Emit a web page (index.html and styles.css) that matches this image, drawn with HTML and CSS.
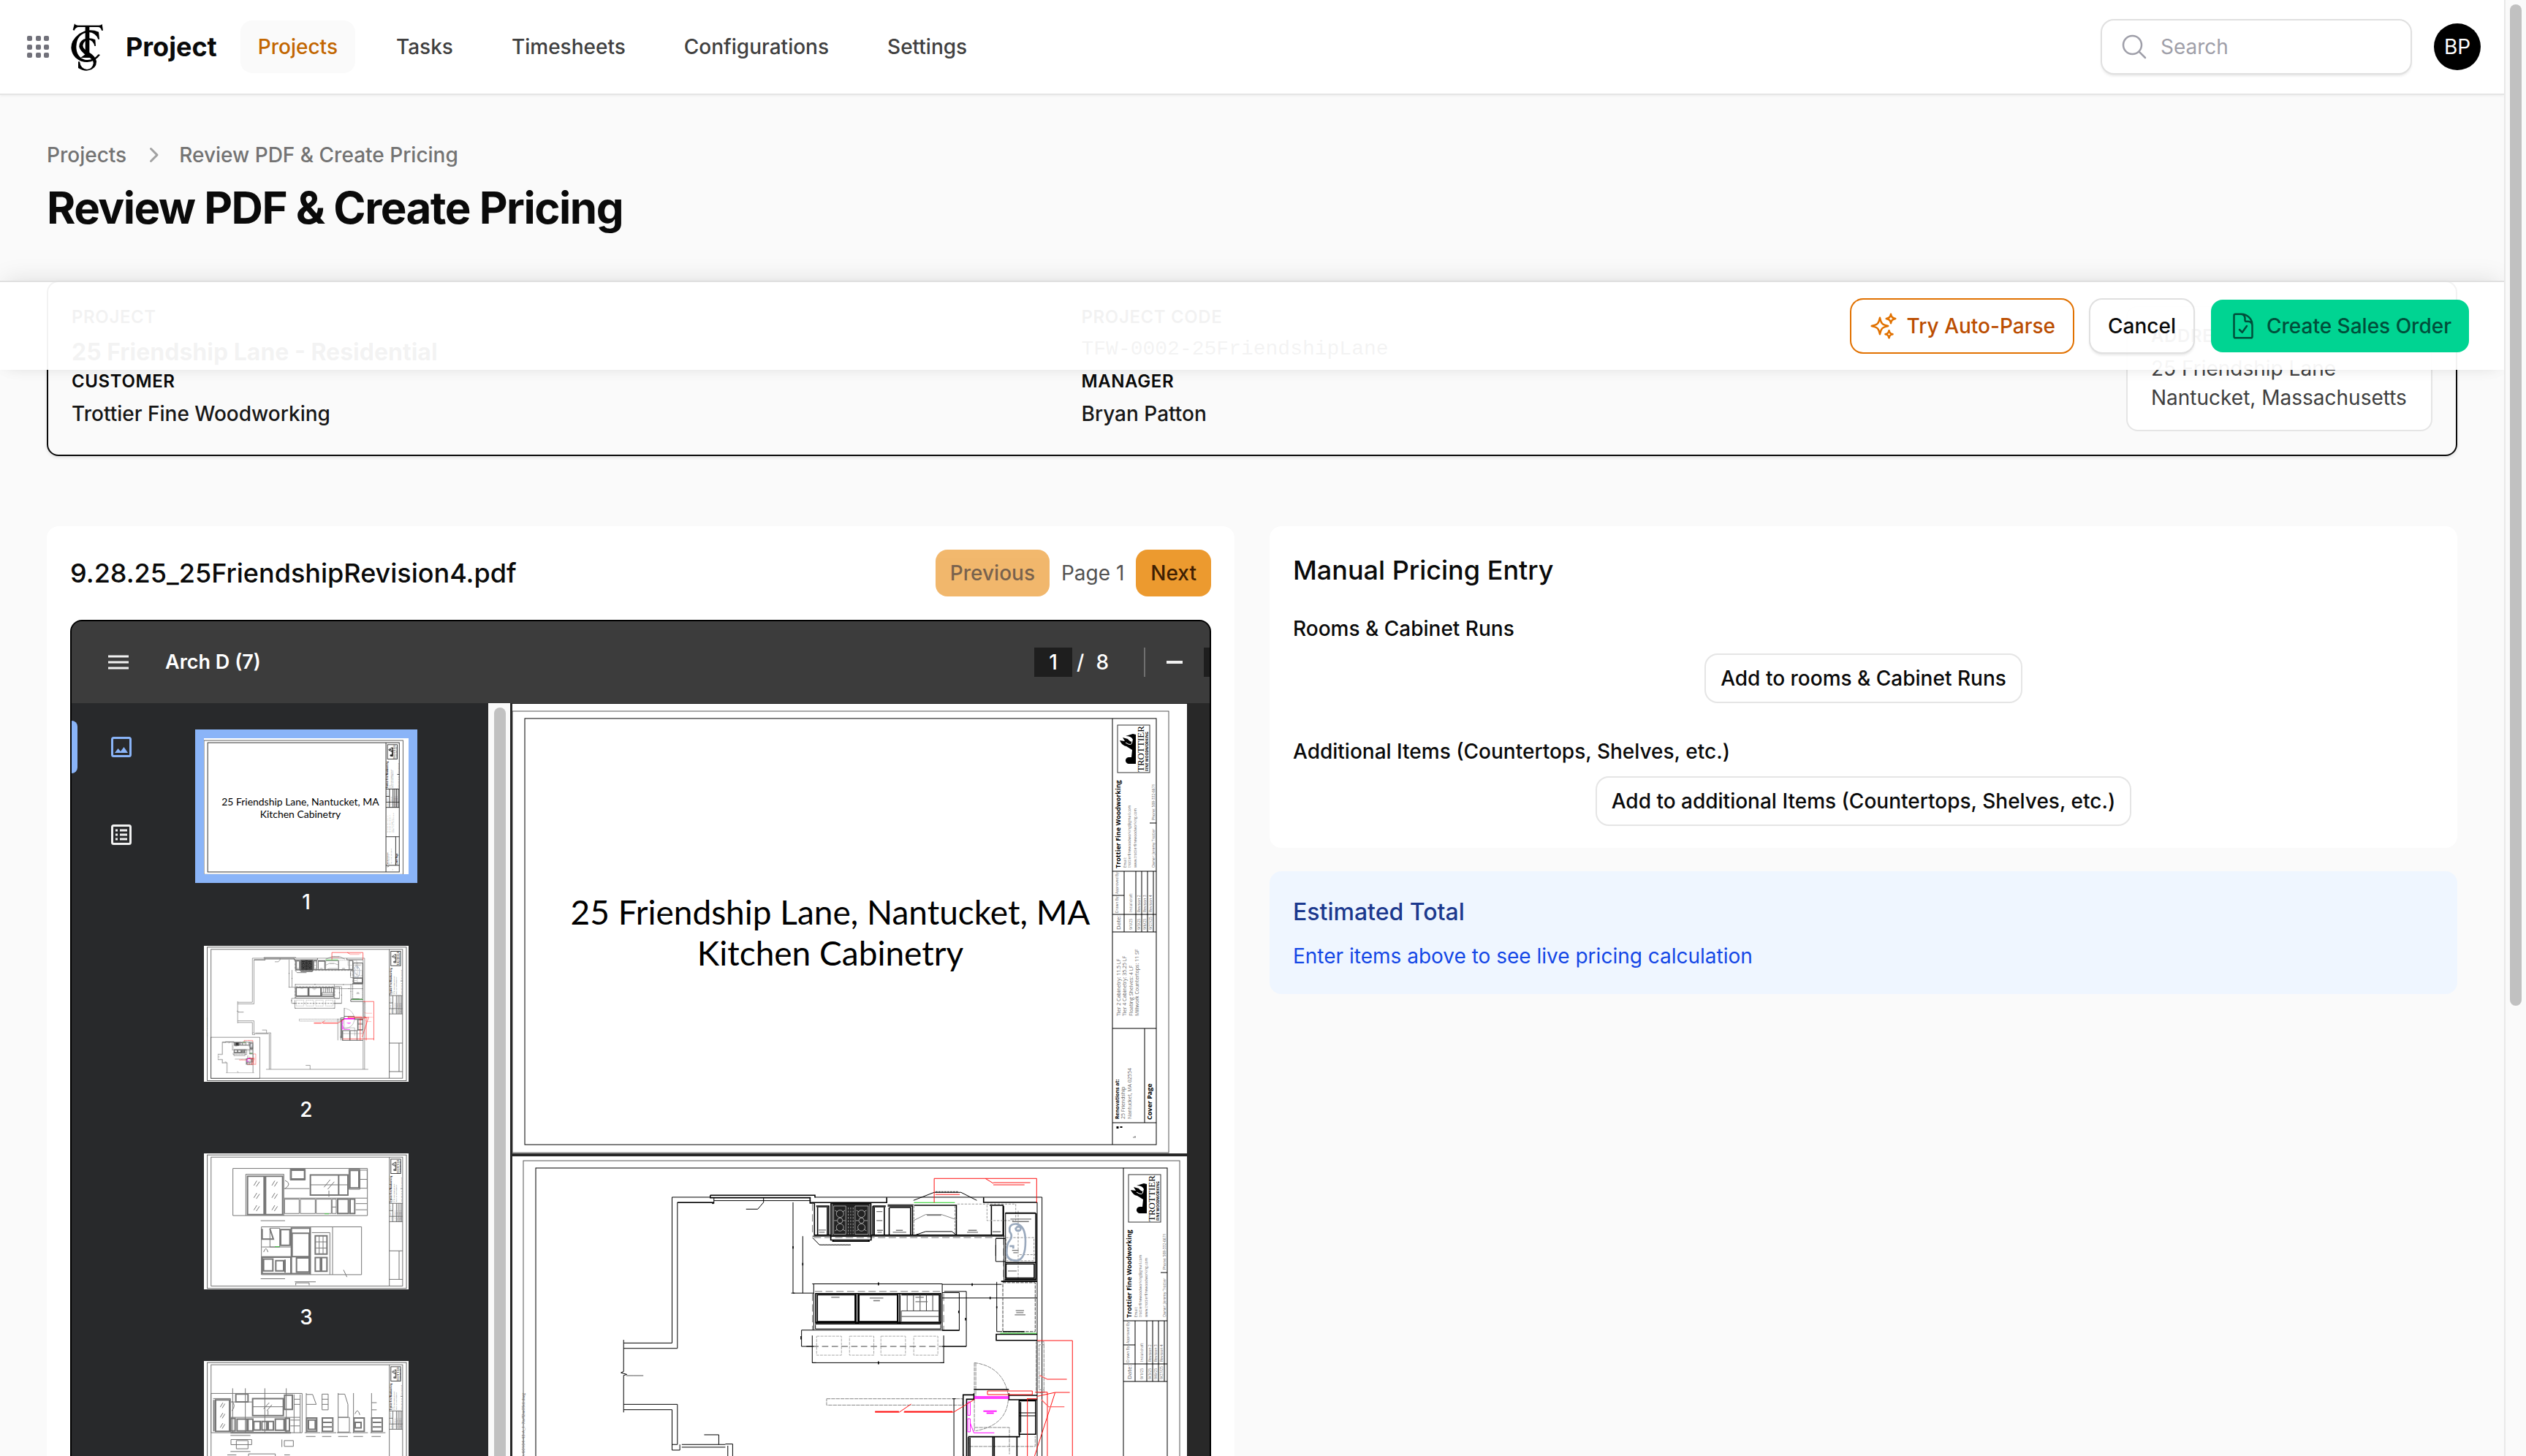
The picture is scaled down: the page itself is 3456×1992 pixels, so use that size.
FILE: index.html
```html
<!DOCTYPE html>
<html lang="en">
<head>
<meta charset="utf-8">
<title>Review PDF &amp; Create Pricing - Project</title>
<link rel="stylesheet" href="styles.css">
</head>
<body>
<svg class="defs" aria-hidden="true">
  <defs>
    <!-- Drawing sheet: border frames and title block -->
    <g id="sheet" class="sheet">
      <rect x="701" y="973" width="898" height="604" stroke="#555"/>
      <rect x="718" y="983" width="864" height="583"/>
      <path d="M1522 983V1566M1522 1192H1582M1522 1275H1582M1522 1251H1582M1522 1225H1538M1538 1192V1275M1554 1192V1275M1562 1192V1275M1570 1192V1275M1578 1192V1275M1522 1407H1582M1566 1407V1536M1522 1536H1582M1573 1126H1582"/>
      <rect x="1529" y="992" width="44" height="65" stroke="#333"/>
      <path class="solid" d="M1554 1005V1045H1546L1544 1045A4 4 0 1 1 1545 1036H1548L1549 1026L1541 1021Q1535 1020 1532 1013L1539 1014L1536 1009L1543 1011Q1549 1018 1550 1012Q1548 1007 1540 1007L1550 1004Z"/>
      <path stroke="#fff" d="M1540 1016Q1549 1022 1549 1014"/>
      <g class="sheet-text">
        <text class="serif" font-size="13" transform="translate(1565 1056) rotate(-90)">TROTTIER</text>
        <text font-size="5" font-weight="700" transform="translate(1571 1055) rotate(-90)">FINE WOODWORKING</text>
        <text font-size="9" font-weight="700" transform="translate(1533 1188) rotate(-90)">Trottier Fine Woodworking</text>
        <g class="faint" font-size="5">
          <text transform="translate(1541 1187) rotate(-90)">Email:</text>
          <text transform="translate(1547 1187) rotate(-90)">trottierfinewoodworking@gmail.com</text>
          <text transform="translate(1555 1187) rotate(-90)">www.trottierfinewoodworking.com</text>
          <text transform="translate(1580 1187) rotate(-90)">Owner: Jeremy Trottier</text>
          <text transform="translate(1580 1122) rotate(-90)">Phone: 508-332-6671</text>
          <text transform="translate(1530 1223) rotate(-90)">Approved By:</text>
          <text transform="translate(1530 1249) rotate(-90)">Drawn By:</text>
          <text transform="translate(1549 1248) rotate(-90)">Initial draft</text>
          <text transform="translate(1549 1272) rotate(-90)">9/1/25</text>
          <text transform="translate(1560 1248) rotate(-90)">Revision 2</text>
          <text transform="translate(1560 1272) rotate(-90)">9/3/25</text>
          <text transform="translate(1568 1248) rotate(-90)">Revision 3</text>
          <text transform="translate(1568 1272) rotate(-90)">9/6/25</text>
          <text transform="translate(1576 1248) rotate(-90)">Revision 4</text>
          <text transform="translate(1576 1272) rotate(-90)">9/27/25</text>
        </g>
        <text class="faint" font-size="8" transform="translate(1533 1272) rotate(-90)">Date:</text>
      </g>
    </g>

    <g id="cover">
      <use href="#sheet"/>
      <text class="cover-title" x="1136" y="1265">25 Friendship Lane, Nantucket, MA</text>
      <text class="cover-title" x="1136" y="1321">Kitchen Cabinetry</text>
      <g class="sheet-text" font-size="7">
        <g class="faint">
          <text transform="translate(1533 1390) rotate(-90)">Tier 2 Cabinetry: 11.5 LF</text>
          <text transform="translate(1541 1390) rotate(-90)">Tier 4 Cabinetry: 35.25 LF</text>
          <text transform="translate(1550 1390) rotate(-90)">Floating Shelves: 4 LF</text>
          <text transform="translate(1558 1390) rotate(-90)">Millwork Countertops: 11 SF</text>
          <text transform="translate(1539 1531) rotate(-90)">25 Friendship</text>
          <text transform="translate(1548 1531) rotate(-90)">Nantucket, MA 02554</text>
        </g>
        <text font-weight="700" transform="translate(1531 1531) rotate(-90)">Renovations at:</text>
        <text font-size="9" font-weight="700" transform="translate(1576 1532) rotate(-90)">Cover Page</text>
      </g>
      <path d="M1529 1541V1544M1534 1541V1543" stroke="#000" stroke-width="3"/>
      <path d="M1553 1556V1554M1550 1556H1554" stroke="#777"/>
    </g>

    <!-- Kitchen floor plan -->
    <g id="plan" class="plan">
      <path d="M-681 743H-482V144H-325M-681 765H-460V166H-310M-681 995H-460V1160H-482M-681 1017H-482V1183H-450V1160M-681 730V860L-692 865L-668 872L-681 876V1028M-442 1160H-263M-442 1171H-263M-263 1158H-233V1654M-253 1165V1654"/>
      <path d="M-640 877H-670M-640 877H-600" stroke="#555"/>
      <path class="thick" d="M-460 166H-310M88 166H400V145M85 145V168H105M798 145V165H1018M-325 136H105V146M-325 136V146H88"/>
      <path d="M-310 146V170H-318M-310 158H88M105 144H1038V1654M1018 165V1654M-297 1654H1088M300 1654V1600H240M-106 147V165L-130 193H-178M-350 1120H-290V1160"/>
      <path d="M15 165V538H100M8 538H22M55 304V538M95 304H882M95 310L124 340H250" />
      <path stroke="#777" stroke-dasharray="30 14" d="M100 310H880M95 170V300M880 310V480M105 531H630M95 540V690M634 540V690"/>
      <path stroke="#666" d="M124 340H252M600 122H695" stroke-width="5" stroke-dasharray="9 3"/>
      <path class="thick" d="M103 170V300H880V180M110 180H162V300M116 186V298M156 186V298M343 180V300M349 186V298M390 186V298M396 180H343M404 180H506V300M412 186H500M410 186V298M498 186V298M512 177H686V300M823 177H878V300M830 180V298"/>
      <path d="M112 184H160M345 184H395M404 175H510M510 157L595 124H705L770 157M686 300L668 285H560L515 300" />
      <path stroke="#888" d="M510 240L560 215H625L686 236"/>
      <path stroke="#999" stroke-dasharray="10 5" d="M690 172H930V240H812V172M512 180V298M680 180V298M940 200V480M890 310H1005V405H890ZM945 380H1010"/>
      <rect class="range" x="170" y="170" width="166" height="135"/>
      <g class="burners">
        <circle cx="208" cy="212" r="15"/><circle cx="296" cy="212" r="15"/><circle cx="208" cy="268" r="15"/><circle cx="296" cy="268" r="15"/><circle cx="208" cy="240" r="11"/><circle cx="296" cy="240" r="11"/>
        <path d="M182 180H232V296H182ZM270 180H324V296H270ZM176 172V300M330 172V300M187 198L198 204M229 198L218 204M187 282L198 276M229 282L218 276M275 198L286 204M317 198L306 204M275 282L286 276M317 282L306 276M184 240H196M220 240H230M273 240H284M308 240H321"/>
        <path stroke-dasharray="8 5" d="M242 186V296M252 186V296M262 186V296"/>
      </g>
      <path class="thick" d="M170 305V320H336V305M176 325H330M180 318V326M326 318V326"/>
      <path d="M888 208H1012V480H888ZM882 300V488M872 490H1018M848 314H888M848 314V408H888M848 340V385"/>
      <path class="thick" d="M888 210H1012M888 412H1012M890 418H1006V476H890ZM1014 210V485M885 483H1014M870 490H1018"/>
      <path stroke="#9aa9bd" stroke-width="8" d="M905 270Q910 252 935 254Q970 262 970 325Q970 400 935 404Q895 405 893 375Q892 335 905 322Q920 305 905 285ZM930 270A10 10 0 1 0 950 275A9 9 0 1 0 932 272M905 345H920V355"/>
      <path d="M100 500H628V690M100 500V690M628 502H872M628 558H1018M628 536H698V692H628M636 531H727V757H634M852 492V696H874M698 690H50V757H94M94 712V824H634V712M107 668V685H622V668"/>
      <path class="thick" d="M108 540H622V658H108ZM115 545H270V655H115ZM286 545H444V655H286ZM460 545H616V655M274 540V662M282 540V662M446 540V662M454 540V662M106 664H624"/>
      <path d="M460 655V611M460 611H614M460 634H614M484 545V611M510 545V611M537 545V611M563 545V611M589 545V611" stroke="#444"/>
      <path stroke="#aaa" stroke-dasharray="12 4" d="M112 715H214V793H112ZM247 715H347V793H247ZM376 715H477V793H376ZM511 715H610V793H511Z"/>
      <path stroke="#444" stroke-dasharray="26 14" d="M94 757H640"/>
      <path d="M94 500H106M94 824H110M620 824H636M628 757H727M100 757H70" />
      <path stroke="#444" stroke-dasharray="14 4" d="M877 495H1010V696H877Z"/>
      <path class="thick" d="M1018 707H850V732H1018M877 696H966"/>
      <path d="M512 166H680M866 703H1016" stroke="#1fd01f"/>
      <path stroke="#888" stroke-dasharray="16 3" d="M1014 738H1046V750H1026V935H1046V948H1014V738M1046 750V935M153 972H712V998H153ZM760 824V1104M766 824V960M760 824Q880 840 900 960Q900 1080 765 1104M760 1090H904V1200M740 1168H1010V1125M735 1130V1160"/>
      <path class="thick" d="M758 950V974H728V1230M758 956H714V1230M902 950V976H1018M902 958H1018M758 934H902M944 980H1012V1118H944ZM950 986V1110M735 1128H945V1110M742 1132V1260M836 1130V1260M842 1130V1260M935 1130V1260M735 1130V1260H1018M948 1118H1012"/>
      <path d="M676 972V1260M670 972H684M944 1030H1012M944 1042H1012M714 1200V1260"/>
      <g stroke="#f0f"><path class="thick" d="M760 964H902M760 970H902"/><path d="M733 985H743V1040H733ZM733 1054H743V1108H733ZM743 1072L758 1112H842"/><path stroke-width="5" d="M797 1023H852M810 1031H840"/></g>
      <g stroke="#f11">
        <path d="M595 166V67H1016V166M805 67L838 87M1018 733H1163V1260M814 940H998V955H814ZM1010 945H1060V1260M978 972V1260M976 972H1020M1018 962L1092 946L1005 1215M352 1027H452L500 994M470 1027H675L762 974M740 1240H1163"/>
        <path stroke="#f66" stroke-width="4" d="M838 84H990M838 93H966M600 133H700M1028 876L1060 892H1140M1092 946H1152M1035 975L1065 1005H1130"/>
        <path stroke-width="5" d="M352 1025H450M472 1025H670"/>
      </g>
      <g stroke="#777" stroke-width="4"><path d="M120 279H150M122 288H145M358 203H382M358 240H382M360 280H384M362 288H380M438 280H466M425 288H480M735 280H770M730 288H775M172 555H206M330 558H386M345 569H372M518 555H552M518 573H568M930 610H964M932 618H962M926 627H970M835 286H868M898 447H934M908 234H994M916 244H984M565 218H624M915 362H942M920 372H938"/></g>
      <path stroke="#000" d="M366 494V506M751 498V508M825 553V563M366 818V830M48 715V728M15 345V355M55 414V424M696 610V620M724 640V650M852 592V600" stroke-width="5"/>
    </g>

    <g id="floor">
      <use href="#sheet" transform="translate(15 615)"/>
      <g transform="translate(1080 1590) scale(.333)">
        <use href="#plan"/>
        <rect x="-1044" y="1218" width="662" height="560" fill="none" stroke="#333" stroke-width="5"/>
        <g class="inset"><use href="#plan" transform="translate(-758 1242) scale(.277)"/></g>
      </g>
      <text class="sheet-text faint" font-size="6" transform="translate(718 1994) rotate(-90)">A-60104-43-A_1-7a/f2w05d.dwg</text>
    </g>
  </defs>
</svg>

<div class="app">
  <div class="page">
    <header class="topbar">
      <button class="apps" aria-label="Apps">
        <svg width="40" height="40" viewBox="0 0 40 40" fill="#71717a"><rect x="5" y="5" width="7" height="7" rx="2"/><rect x="17" y="5" width="7" height="7" rx="2"/><rect x="28" y="5" width="7" height="7" rx="2"/><rect x="5" y="17" width="7" height="7" rx="2"/><rect x="17" y="17" width="7" height="7" rx="2"/><rect x="28" y="17" width="7" height="7" rx="2"/><rect x="5" y="28" width="7" height="7" rx="2"/><rect x="17" y="28" width="7" height="7" rx="2"/><rect x="28" y="28" width="7" height="7" rx="2"/></svg>
      </button>
      <a class="brand" href="#">
        <svg width="46" height="66" viewBox="225 92 138 198"><path d="M236 122L243 96Q246 103 256 103H344Q352 103 356 98L360 124H354Q350 110 340 110H304V222L322 236H268L287 222V110H260Q248 110 242 124Z"/><path d="M345 160L342 130Q300 112 262 138Q228 165 229 195Q232 235 270 250Q320 264 348 224L341 222Q318 250 285 244Q250 232 250 190Q252 137 300 131Q330 133 340 160Z"/><path d="M330 188L328 162Q305 150 280 160Q260 172 262 192Q266 210 296 230Q322 244 320 260Q316 282 294 284Q268 282 264 252H258V278Q280 292 300 288Q334 280 333 250Q330 230 300 212Q278 200 277 186Q280 166 300 162Q320 166 325 188Z"/></svg>
        <span>Project</span>
      </a>
      <nav class="nav">
        <a class="active" href="#">Projects</a>
        <a href="#">Tasks</a>
        <a href="#">Timesheets</a>
        <a href="#">Configurations</a>
        <a href="#">Settings</a>
      </nav>
      <label class="search">
        <svg width="40" height="40" viewBox="0 0 24 24" fill="none" stroke="#9f9fa9" stroke-width="1.5" stroke-linecap="round"><path d="m21 21-5.197-5.197m0 0A7.5 7.5 0 1 0 5.196 5.196a7.5 7.5 0 0 0 10.607 10.607Z"/></svg>
        <input type="search" placeholder="Search" aria-label="Search">
      </label>
      <button class="avatar">BP</button>
    </header>

    <main>
      <div class="heading">
        <nav class="crumbs" aria-label="Breadcrumb">
          <a href="#">Projects</a>
          <svg width="40" height="40" viewBox="0 0 20 20" fill="#a1a1a1"><path d="M8.22 5.22a.75.75 0 0 1 1.06 0l4.25 4.25a.75.75 0 0 1 0 1.06l-4.25 4.25a.75.75 0 0 1-1.06-1.06L11.94 10 8.22 6.28a.75.75 0 0 1 0-1.06Z"/></svg>
          <a href="#">Review PDF &amp; Create Pricing</a>
        </nav>
        <h1>Review PDF &amp; Create Pricing</h1>
      </div>

      <div class="summary-wrap">
        <section class="summary">
          <dl class="facts">
            <div><dt>Project</dt><dd class="big">25 Friendship Lane - Residential</dd></div>
            <div><dt>Project Code</dt><dd class="code">TFW-0002-25FriendshipLane</dd></div>
            <div><dt>Customer</dt><dd>Trottier Fine Woodworking</dd></div>
            <div><dt>Manager</dt><dd>Bryan Patton</dd></div>
          </dl>
          <div class="address">
            <h2>Address</h2>
            <p>25 Friendship Lane<br>Nantucket, Massachusetts</p>
          </div>
        </section>
        <div class="actions">
          <button class="btn outline-primary">
            <svg width="40" height="40" viewBox="0 0 24 24" fill="none" stroke="#e17100" stroke-width="1.5" stroke-linecap="round" stroke-linejoin="round"><path d="M9.813 15.904 9 18.75l-.813-2.846a4.5 4.5 0 0 0-3.09-3.09L2.25 12l2.846-.813a4.5 4.5 0 0 0 3.09-3.09L9 5.25l.813 2.846a4.5 4.5 0 0 0 3.09 3.09L15.75 12l-2.846.813a4.5 4.5 0 0 0-3.09 3.09ZM18.259 8.715 18 9.75l-.259-1.035a3.375 3.375 0 0 0-2.455-2.456L14.25 6l1.036-.259a3.375 3.375 0 0 0 2.455-2.456L18 2.25l.259 1.035a3.375 3.375 0 0 0 2.456 2.456L21.75 6l-1.035.259a3.375 3.375 0 0 0-2.456 2.456ZM16.894 20.567 16.5 21.75l-.394-1.183a2.25 2.25 0 0 0-1.423-1.423L13.5 18.75l1.183-.394a2.25 2.25 0 0 0 1.423-1.423l.394-1.183.394 1.183a2.25 2.25 0 0 0 1.423 1.423l1.183.394-1.183.394a2.25 2.25 0 0 0-1.423 1.423Z"/></svg>
            Try Auto-Parse
          </button>
          <button class="btn outline">Cancel</button>
          <button class="btn success">
            <svg width="40" height="40" viewBox="0 0 24 24" fill="none" stroke="#004f3b" stroke-width="1.5" stroke-linecap="round" stroke-linejoin="round"><path d="M10.125 2.25h-4.5c-.621 0-1.125.504-1.125 1.125v17.25c0 .621.504 1.125 1.125 1.125h12.75c.621 0 1.125-.504 1.125-1.125v-9M10.125 2.25h.375a9 9 0 0 1 9 9v.375M10.125 2.25A3.375 3.375 0 0 1 13.5 5.625v1.5c0 .621.504 1.125 1.125 1.125h1.5a3.375 3.375 0 0 1 3.375 3.375M9 15l2.25 2.25L15 12"/></svg>
            Create Sales Order
          </button>
        </div>
      </div>

      <div class="columns">
        <section class="card">
          <div class="card-head">
            <h2>9.28.25_25FriendshipRevision4.pdf</h2>
            <button class="pager" disabled>Previous</button>
            <span class="page-no">Page 1</span>
            <button class="pager">Next</button>
          </div>
          <div class="viewer">
            <div class="toolbar">
              <button class="tool" aria-label="Menu"><svg width="28" height="20" viewBox="0 0 28 20" stroke="#f1f1f1" stroke-width="3"><path d="M0 2H28M0 10H28M0 18H28"/></svg></button>
              <span class="doc">Arch D (7)</span>
              <input class="page-input" value="1" aria-label="Page number">
              <span class="slash">/</span><span class="total">8</span>
              <span class="sep"></span>
              <button class="tool" aria-label="Zoom out"><svg width="22" height="4" viewBox="0 0 22 4"><path d="M0 2H22" stroke="#f1f1f1" stroke-width="4"/></svg></button>
              <span class="zoom"></span>
            </div>
            <div class="viewer-body">
              <div class="rail">
                <button class="rail-btn on" aria-label="Thumbnails"><svg width="28" height="28" viewBox="0 0 28 28"><rect x="1.500" y="1.500" width="25" height="25" rx="2" fill="none" stroke="#8ab4f8" stroke-width="3"/><path fill="#8ab4f8" d="M5 22L9.500 16L13 20L17.500 14L23 22Z"/></svg></button>
                <button class="rail-btn" aria-label="Document outline"><svg width="28" height="28" viewBox="0 0 28 28" fill="none" stroke="#f1f1f1" stroke-width="3"><rect x="1.500" y="1.500" width="25" height="25" rx="2"/><path d="M6 8H9M12 8H22M6 14H9M12 14H22M6 20H9M12 20H22"/></svg></button>
              </div>
              <ol class="thumbs">
                <li class="current"><svg class="thumb" viewBox="701 963 923 613" preserveAspectRatio="none"><use href="#cover"/></svg><span>1</span></li>
                <li><svg class="thumb" viewBox="701 1582 923 615" preserveAspectRatio="none"><use href="#floor"/></svg><span>2</span></li>
                <li><svg class="thumb" viewBox="117 681 840 398" preserveAspectRatio="none">
                  <use href="#sheet" transform="matrix(.91 0 0 .647 -507 56)"/>
                  <g class="elev">
                    <path d="M236 725H788V863H236ZM289 742H445V863M289 742V863M471 727H533V759H471ZM712 727H757V786H712ZM757 730H787V783H757ZM757 757H787M445 812H788M445 784H550M448 815H508V857H448ZM513 815H574V857H513ZM578 815H640V857H578ZM643 815H660V857H643ZM643 838H660M740 828H786M740 846H786"/>
                    <path class="heavy" d="M296 748H364V860H296ZM370 748H440V860H370ZM475 730H530V756H475ZM554 744H708V803H554ZM670 744V803M716 731H753V782H716ZM666 815H710V857H666ZM717 815H736V857H717Z"/>
                    <path d="M554 773H708M610 780L635 758M625 786L652 764M322 775L334 761M332 778L345 764M322 811L334 797M332 814L345 800M322 847L334 833M332 850L345 836M396 775L408 761M406 778L419 764M396 811L408 797M406 814L419 800M396 847L408 833M406 850L419 836M630 808V790M450 760Q480 770 450 784"/>
                    <path d="M353 896H764V1036H353ZM555 896V1036M645 896V1036M560 913H634V1036M388 900H428V955H388ZM355 955H474M355 983H474M362 970Q372 950 380 970"/>
                    <path class="heavy" d="M356 902V932H402L388 902M432 904H470V950H432ZM479 915H549V983H479ZM497 987H549V1028H497ZM356 985H474V1033H356ZM362 990H400V1025H362ZM412 995H444V1025H412ZM450 992V1030M476 900V1033H552V900ZM574 922H622V976H574ZM574 986H595V1026H574ZM600 986H622V1026H600Z"/>
                    <path d="M590 922V976M606 922V976M574 940H622M574 958H622M690 1022L704 1043M350 878H450M350 1048H450M490 1057H576M494 1067V1060H549V1067"/>
                    <path stroke="#4c4" d="M408 954H428M612 858H630"/>
                  </g></svg><span>3</span></li>
                <li><svg class="thumb" viewBox="117 1290 840 398" preserveAspectRatio="none">
                  <use href="#sheet" transform="matrix(.91 0 0 .647 -507 665)"/>
                  <g class="elev">
                    <path d="M146 1385H520V1500H146ZM155 1400H226V1498M235 1370V1500M287 1370V1500M367 1370V1500M455 1370V1500M228 1410H316M316 1424H445M226 1455H512M487 1388V1500M512 1388V1500M487 1402H512M487 1417H512M472 1463H510M472 1480H510"/>
                    <path class="heavy" d="M158 1404V1496M165 1404H222V1496H165ZM248 1387H298V1410H248ZM317 1400H443V1450H317ZM448 1390H480V1432H448ZM228 1458H245V1495H228ZM253 1460H293V1495H253ZM298 1460H318V1495H298ZM322 1467H348V1492H322ZM355 1467H375V1492H355ZM381 1467H402V1492H381ZM410 1460H446V1493H410ZM452 1458H468V1495H452ZM226 1500H474"/>
                    <path d="M184 1425L195 1412M192 1428L203 1415M184 1455L195 1442M192 1458L203 1445M184 1485L195 1472M192 1488L203 1475M362 1430L385 1412M375 1436L396 1418M380 1448V1435M232 1408Q250 1420 232 1436"/>
                    <path d="M537 1384V1500M537 1388H563L578 1417H537M602 1387H627V1433H602ZM602 1402H627M602 1417H627M668 1384V1500M668 1387H695L708 1417V1455H668M731 1384V1500M805 1384V1500M805 1412H826M805 1433H826M668 1455H714V1498H668M737 1445Q748 1425 757 1448M530 1500H595M597 1500H660M663 1500H722M727 1500H790M800 1500H862"/>
                    <path class="heavy" d="M539 1457H580V1496H539ZM546 1463H574V1490H546ZM603 1457H646V1496H603ZM606 1470H642M606 1483H642M733 1457H775V1496H733ZM738 1470H762V1486H738ZM806 1457H849V1496H806ZM810 1470H845M810 1483H845"/>
                    <path d="M226 1508H308M226 1555H308M536 1511H575M602 1511H640M668 1511H708M731 1511H770M805 1511H843M228 1520H313V1535H228ZM250 1523H298V1547H250ZM447 1523H484V1540H447ZM437 1520V1542M300 1562H410M300 1562V1580M410 1562V1580M213 1565H250M447 1565H470M240 1600H800V1650H240Z"/>
                  </g></svg><span>4</span></li>
              </ol>
              <div class="track"><i></i></div>
              <div class="sheets">
                <svg class="leaf" viewBox="701 963 923 615"><use href="#cover"/></svg>
                <svg class="leaf" viewBox="701 1582 923 615"><use href="#floor"/></svg>
              </div>
            </div>
          </div>
        </section>

        <div class="side">
          <section class="card">
            <h2>Manual Pricing Entry</h2>
            <div class="field">
              <h3>Rooms &amp; Cabinet Runs</h3>
              <button class="add">Add to rooms &amp; Cabinet Runs</button>
            </div>
            <div class="field">
              <h3>Additional Items (Countertops, Shelves, etc.)</h3>
              <button class="add">Add to additional Items (Countertops, Shelves, etc.)</button>
            </div>
          </section>
          <section class="total-card">
            <h2>Estimated Total</h2>
            <p>Enter items above to see live pricing calculation</p>
          </section>
        </div>
      </div>
    </main>
  </div>
  <div class="scrollbar"><i></i></div>
</div>
</body>
</html>
```
FILE: styles.css
```css
* { box-sizing: border-box; margin: 0; padding: 0; }
body { font: 400 28px/40px Inter, "Liberation Sans", sans-serif; color: #0a0a0a; background: #fafafa; overflow: hidden; }
a { color: inherit; text-decoration: none; }
button, input { font: inherit; color: inherit; border: 0; background: none; }
svg { display: block; flex: none; }
.defs { position: absolute; width: 0; height: 0; }

.app { display: flex; height: 100vh; }
.page { flex: 1; min-width: 0; overflow: hidden; }
.scrollbar { width: 30px; background: #fafafa; border-left: 2px solid #e8e8e8; padding: 6px 6px 0; }
.scrollbar i { display: block; height: 69%; border-radius: 8px; background: #c1c1c1; }

.topbar { display: flex; align-items: center; height: 128px; padding: 0 32px; background: #fff; box-shadow: 0 2px 0 #e5e5e5, 0 3px 4px rgba(0,0,0,.06); }
.apps { margin-right: 24px; }
.brand { display: flex; align-items: center; gap: 30px; margin-right: 32px; font-size: 36px; font-weight: 700; }
.nav { display: flex; gap: 32px; flex: 1; font-weight: 500; color: #404040; }
.nav a { padding: 16px 24px; border-radius: 16px; }
.nav .active { background: #fafafa; color: #c26600; }
.search { display: flex; align-items: center; gap: 16px; width: 422px; height: 72px; padding: 0 24px; border-radius: 16px; box-shadow: 0 0 0 2px #e0e0e0, 0 3px 4px rgba(0,0,0,.14); background: #fff; margin-right: 32px; }
.search input { flex: 1; min-width: 0; outline: 0; }
.search input::placeholder { color: #9f9fa9; opacity: 1; }
.avatar { width: 64px; height: 64px; border-radius: 50%; background: #000; color: #fff; }

.heading { padding: 64px; }
.crumbs { display: flex; gap: 16px; font-weight: 500; color: #737373; }
h1 { margin-top: 16px; font-size: 60px; line-height: 72px; font-weight: 700; letter-spacing: -.025em; }
h2, h3 { font-weight: 500; }

.summary-wrap { position: relative; padding: 0 64px; }
.summary { display: flex; gap: 48px; min-height: 240px; padding: 32px; border: 2px solid #0a0a0a; border-radius: 16px; box-shadow: 0 2px 4px rgba(0,0,0,.1); }
.facts { flex: 1; display: grid; grid-template-columns: 1fr 1fr; grid-template-rows: 88px auto; }
.facts dt, .address h2 { font-size: 24px; line-height: 32px; font-weight: 600; letter-spacing: .025em; text-transform: uppercase; margin-bottom: 8px; }
.facts dd { font-weight: 500; color: #171717; }
.facts .big { font-size: 32px; line-height: 48px; font-weight: 700; }
.facts .code { font-family: "Liberation Mono", monospace; font-weight: 400; }
.address { width: 419px; padding: 24px 32px; border: 2px solid #e5e5e5; border-radius: 16px; background: #fff; color: #404040; white-space: nowrap; }

.actions { position: absolute; inset: 0 0 auto; display: flex; justify-content: flex-end; gap: 24px; padding: 24px 48px; border-top: 2px solid #e0e0e0; background: rgba(255,255,255,.95); box-shadow: 0 -8px 30px -6px rgba(0,0,0,.1), 0 6px 20px -10px rgba(0,0,0,.1); }
.btn { display: flex; align-items: center; gap: 12px; height: 72px; padding: 0 24px; border-radius: 16px; font-weight: 500; }
.outline { box-shadow: 0 0 0 2px #e0e0e0, 0 3px 4px rgba(0,0,0,.14); }
.outline-primary { color: #bb4d00; box-shadow: 0 0 0 2px #e17100; background: #fff; }
.success { background: #00d492; color: #004f3b; }

.columns { display: grid; grid-template-columns: 1fr 1fr; gap: 48px; padding: 96px 64px 0; align-items: start; }
.card { background: #fff; border-radius: 16px; padding: 32px; }
.card h2 { font-size: 36px; line-height: 56px; }
.card-head { display: flex; align-items: center; gap: 16px; margin-bottom: 32px; }
.card-head h2 { flex: 1; }
.pager { height: 64px; padding: 0 20px; border-radius: 16px; background: #ec9a2f; color: #3f2003; font-weight: 500; }
.pager:disabled { opacity: .7; }
.page-no { color: #525252; }

.side { display: grid; gap: 32px; }
.field { display: grid; gap: 16px; justify-items: center; margin-top: 32px; }
.field + .field { margin-top: 48px; }
.field h3 { justify-self: start; font-size: 28px; line-height: 40px; }
.add { height: 64px; padding: 0 20px; border-radius: 16px; box-shadow: 0 0 0 2px #e5e5e5; font-weight: 500; }
.total-card { padding: 32px; border-radius: 16px; background: #eff6ff; color: #1447e6; }
.total-card h2 { font-size: 32px; line-height: 48px; margin-bottom: 16px; color: #1c398e; }

.viewer { height: 1600px; border: 2px solid #000; border-radius: 16px; overflow: hidden; background: #282828; }
.toolbar { display: flex; align-items: center; height: 112px; padding-left: 50px; background: #3c3c3c; color: #fff; font-weight: 500; }
.tool { display: block; }
.doc { flex: 1; margin-left: 50px; font-weight: 600; font-size: 27px; }
.page-input { width: 52px; height: 40px; background: #1e1e1e; text-align: center; font-weight: 500; }
.slash { margin: 0 16px 0 6px; }
.sep { width: 2px; height: 40px; margin: 0 29px 0 48px; background: #6f6f6f; }
.zoom { width: 8px; height: 40px; margin-left: 29px; background: #1e1e1e; }

.viewer-body { display: flex; height: 1488px; }
.rail, .thumbs { background: #28292b; }
.rail { display: flex; flex-direction: column; gap: 48px; width: 120px; padding-top: 24px; }
.rail-btn { display: flex; align-items: center; height: 72px; padding-left: 54px; }
.rail-btn.on { padding-left: 0; }
.rail-btn.on::before { content: ""; width: 8px; height: 72px; margin-right: 46px; border-radius: 0 8px 8px 0; background: #8ab4f8; }
.thumbs { list-style: none; width: 450px; padding: 48px 0 0 61px; }
.thumbs li { width: 280px; height: 284px; text-align: center; color: #fff; font-weight: 500; }
.thumb { width: 280px; height: 186px; margin-bottom: 18px; background: #fff; --line: 6px; --frame: 3px; --ink: #666; overflow: hidden; }
.current .thumb { outline: 12px solid #8ab4f8; --ink: #222; }
.track { width: 30px; padding: 6px 6px 0 8px; background: #fafafa; }
.track i { display: block; height: 96%; border-radius: 8px; background: #c1c1c1; }
.sheets { flex: 1; min-width: 0; display: grid; align-content: start; gap: 4px; padding: 1px 31px 0 3px; }
.leaf { width: 100%; background: #fff; --line: 3px; --frame: 1px; --ink: #000; }

.sheet { fill: none; stroke: var(--ink); stroke-width: var(--frame); }
.sheet .solid { fill: var(--ink); stroke: none; }
.sheet-text { fill: #000; stroke: none; font-family: "Open Sans", sans-serif; }
.serif { font-family: "Liberation Serif", serif; }
.faint { fill: #666; }
.cover-title { font: 400 46px Lato, sans-serif; text-anchor: middle; fill: #000; }
.plan { fill: none; stroke: var(--ink); stroke-width: var(--line); }
.plan .thick { stroke-width: calc(var(--line) * 1.6); }
.plan .range { fill: #222; }
.plan .burners { stroke: #ddd; stroke-width: 2px; }
.inset { --line: 14px; }
.elev { fill: none; stroke: #777; stroke-width: 1px; }
.elev path { vector-effect: non-scaling-stroke; }
.elev .heavy { stroke-width: 2px; }
```
